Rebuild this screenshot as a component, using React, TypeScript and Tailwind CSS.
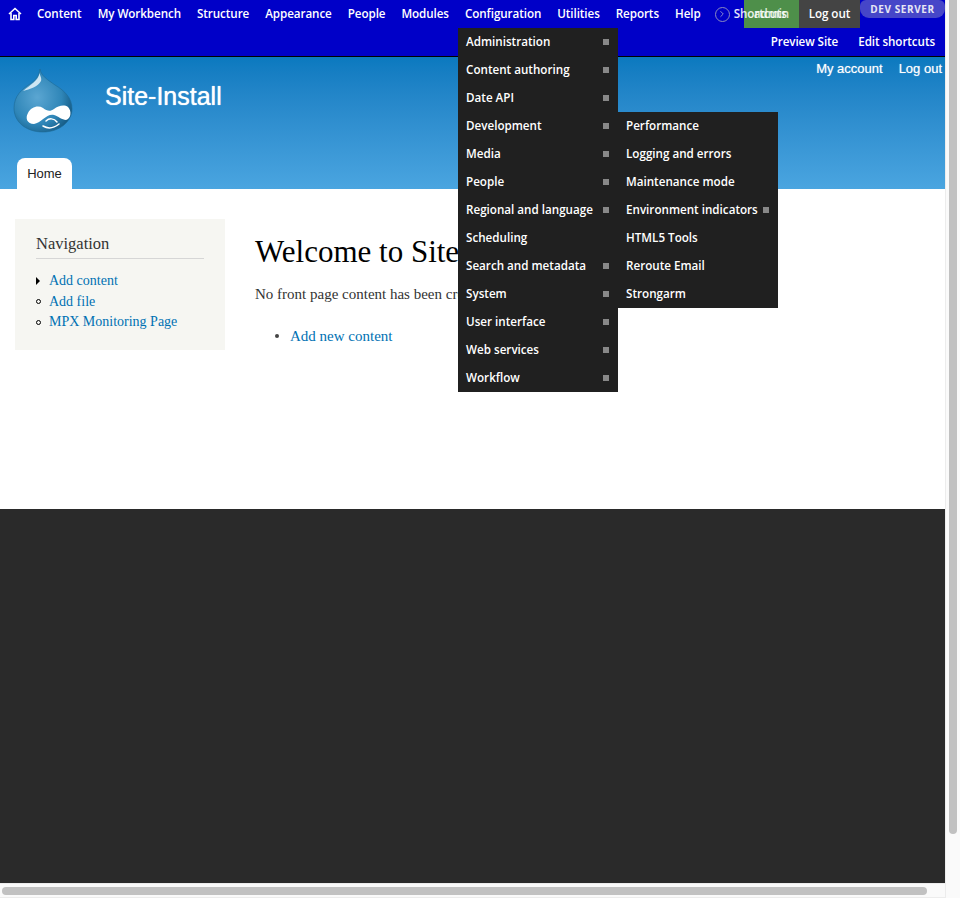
import { ChevronRight } from 'lucide-react'

const navItems = ['Content', 'My Workbench', 'Structure', 'Appearance', 'People', 'Modules', 'Configuration', 'Utilities', 'Reports', 'Help']

const configItems = [
  { label: 'Administration', more: true },
  { label: 'Content authoring', more: true },
  { label: 'Date API', more: true },
  { label: 'Development', more: true },
  { label: 'Media', more: true },
  { label: 'People', more: true },
  { label: 'Regional and language', more: true },
  { label: 'Scheduling', more: false },
  { label: 'Search and metadata', more: true },
  { label: 'System', more: true },
  { label: 'User interface', more: true },
  { label: 'Web services', more: true },
  { label: 'Workflow', more: true },
]

const devItems = [
  { label: 'Performance', more: false },
  { label: 'Logging and errors', more: false },
  { label: 'Maintenance mode', more: false },
  { label: 'Environment indicators', more: true },
  { label: 'HTML5 Tools', more: false },
  { label: 'Reroute Email', more: false },
  { label: 'Strongarm', more: false },
]

function DrupalLogo() {
  return (
    <svg width="60" height="66" viewBox="0 0 60 66">
      <defs>
        <radialGradient id="drop" cx="40%" cy="45%" r="65%">
          <stop offset="0%" stopColor="#5ba6d2" />
          <stop offset="65%" stopColor="#2f86b8" />
          <stop offset="100%" stopColor="#155a84" />
        </radialGradient>
      </defs>
      <path d="M27 1 C28 8 35 12 42 17 C52 23 59 30 59 41 C59 54 46 64 30 64 C13 64 1 54 1 40 C1 28 9 21 17 16 C22 13 26 8 27 1 Z" fill="url(#drop)" stroke="#1d6a96" strokeWidth="0.6" />
      <path d="M26.5 5 C26 12 17 17 10 23 C17 21 25 19 28 13 C29 10 27 8 26.5 5 Z" fill="#cfe6f3" />
      <path d="M21 56 C14 56 12 50 15 45 C18 39 25 37 30 40 C34 43 37 44 41 41 C45 38 51 36 55 39 C59 43 58 51 53 52 C49 52 45 48 41 47 C34 45 28 55 21 56 Z" fill="#ffffff" />
      <path d="M33 53 C36 50 41 50 44 54 M30 58 C35 61 41 60 46 56" fill="none" stroke="#ffffff" strokeWidth="1.5" strokeLinecap="round" />
    </svg>
  )
}

function Menu({ items, className }: { items: { label: string; more: boolean }[]; className: string }) {
  return (
    <ul className={className}>
      {items.map((item) => (
        <li key={item.label} className="flex h-7 items-center justify-between whitespace-nowrap pl-2 pr-[9px] text-[11.65px] font-semibold text-white">
          <span>{item.label}</span>
          {item.more && <span className="h-1.5 w-1.5 bg-[#888888]" />}
        </li>
      ))}
    </ul>
  )
}

export default function App() {
  return (
    <div className="relative flex h-[898px] w-[960px] overflow-hidden bg-white font-['Liberation_Serif',serif]">
      <div className="flex w-[945px] flex-col">
        {/* Toolbar */}
        <div className="relative h-[57px] shrink-0 border-b border-black bg-[#0000c8] font-['Open_Sans',sans-serif] text-[11.65px] font-semibold tracking-[-0.08px] text-white">
          <div className="flex h-7 items-center whitespace-nowrap">
            <div className="flex w-[29px] justify-center">
              <svg width="14" height="14" viewBox="0 0 14 14" fill="none" stroke="#ffffff" strokeWidth="1.6">
                <path d="M1 7 L7 1.5 L13 7" />
                <path d="M3 6 V12.5 H5.8 V8.5 H8.2 V12.5 H11 V6" />
              </svg>
            </div>
            {navItems.map((item) => (
              <span key={item} className="px-2">{item}</span>
            ))}
            <span className="ml-[6px] flex h-[15px] w-[15px] items-center justify-center rounded-full border border-[#8a8ac0]">
              <ChevronRight size={10} color="#a0a0d0" />
            </span>
            <span className="relative z-10 ml-1 text-white/90">Shortcuts</span>
          </div>
          <div className="flex h-7 justify-end gap-5 pr-[10px] pt-[5px] whitespace-nowrap">
            <span>Preview Site</span>
            <span>Edit shortcuts</span>
          </div>
          <div className="absolute left-[744px] top-0 flex h-7 w-[55px] items-center justify-center bg-[#4e8f4a] text-[#d8e8d4]">admin</div>
          <div className="absolute left-[799px] top-0 flex h-7 w-[61px] items-center justify-center bg-[#444444]">Log out</div>
          <div className="absolute left-[860px] top-0 flex h-[18px] w-[85px] items-center justify-center rounded-b-[9px] rounded-t-[6px] bg-[#4646c8] text-[10px] font-bold tracking-[0.6px] text-[#e6e6f4]">DEV SERVER</div>
        </div>

        {/* Header */}
        <div className="relative h-[132px] shrink-0 bg-gradient-to-b from-[#0a79bf] to-[#4aa5e0] font-['Liberation_Sans',sans-serif] text-white">
          <div className="flex h-5 items-start justify-end gap-4 pr-[3px] pt-[2px] text-[13px] [text-shadow:0_0_1px_rgba(255,255,255,0.6)]">
            <span>My account</span>
            <span>Log out</span>
          </div>
          <div className="flex items-start pl-[13px]">
            <div className="-mt-[9px]"><DrupalLogo /></div>
            <span className="ml-8 mt-[4px] text-[25px] leading-[30px] [text-shadow:0_0_1px_#ffffff]">Site-Install</span>
          </div>
          <div className="absolute bottom-0 left-[17px] flex h-[31px] w-[55px] items-center justify-center rounded-t-lg bg-white text-[13px] text-[#222222]">Home</div>
        </div>

        {/* Content */}
        <div className="flex h-[320px] shrink-0 items-start gap-[30px] pl-[15px] pt-[30px] text-[#333333]">
          <div className="h-[131px] w-[210px] bg-[#f6f6f2] px-[21px] pt-[15px]">
            <h2 className="border-b border-[#d6d6d6] pb-[5px] text-[16.5px] leading-[19px]">Navigation</h2>
            <ul className="mt-[12px] text-[14px] leading-[20.5px] text-[#0071b3]">
              <li className="flex items-center gap-[9px]">
                <span className="h-0 w-0 border-y-[4px] border-l-[4px] border-y-transparent border-l-black" />
                <span>Add content</span>
              </li>
              <li className="flex items-center gap-[8px]">
                <span className="h-[5px] w-[5px] rounded-full border border-black" />
                <span>Add file</span>
              </li>
              <li className="flex items-center gap-[8px]">
                <span className="h-[5px] w-[5px] rounded-full border border-black" />
                <span>MPX Monitoring Page</span>
              </li>
            </ul>
          </div>
          <div className="pt-[16px]">
            <h1 className="whitespace-nowrap text-[31px] font-normal leading-[34px] text-black">Welcome to Site-Install</h1>
            <p className="mt-[15px] whitespace-nowrap text-[15px] leading-[20px]">No front page content has been created yet.</p>
            <ul className="mt-[22px] pl-5 text-[15px] leading-[20px]">
              <li className="flex items-center gap-[11px]">
                <span className="h-1 w-1 rounded-full bg-[#444444]" />
                <span className="text-[#0071b3]">Add new content</span>
              </li>
            </ul>
          </div>
        </div>

        {/* Footer */}
        <div className="flex-1 bg-[#2a2a2a]" />

        {/* Horizontal scrollbar */}
        <div className="h-[15px] shrink-0 border-y border-[#ececec] bg-[#fafafa] pl-[2px] pt-[3px]">
          <div className="h-2 w-[925px] rounded bg-[#c1c1c1]" />
        </div>
      </div>

      {/* Vertical scrollbar */}
      <div className="w-[15px] shrink-0 border-l border-[#ececec] bg-[#fafafa] pl-[3px]">
        <div className="h-[834px] w-2 rounded-b bg-[#c1c1c1]" />
      </div>

      {/* Open dropdowns */}
      <Menu items={configItems} className="absolute left-[458px] top-[28px] w-40 bg-[#202020] font-['Open_Sans',sans-serif]" />
      <Menu items={devItems} className="absolute left-[618px] top-[112px] w-40 bg-[#202020] font-['Open_Sans',sans-serif]" />
    </div>
  )
}
